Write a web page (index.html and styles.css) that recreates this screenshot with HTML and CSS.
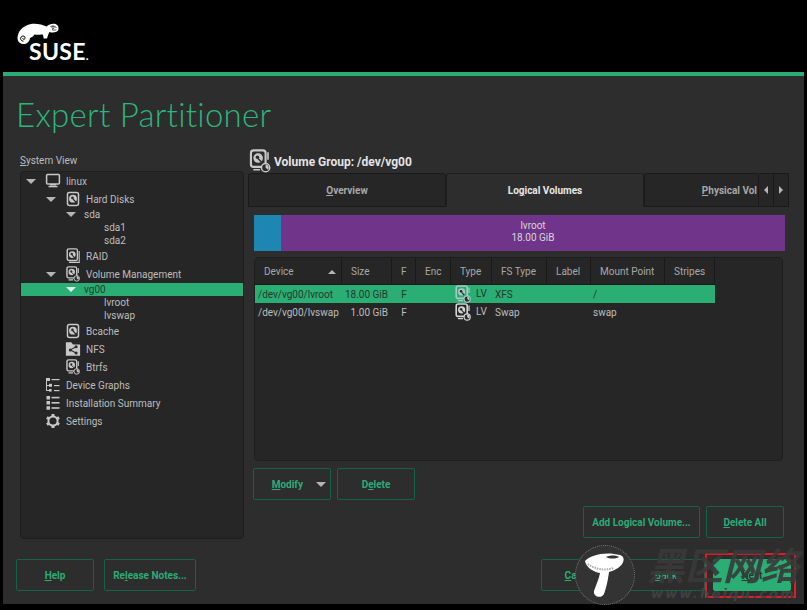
FILE: index.html
```html
<!DOCTYPE html>
<html lang="en">
<head>
<meta charset="utf-8">
<title>Expert Partitioner</title>
<link rel="stylesheet" href="styles.css">
</head>
<body>
<svg class="defs" width="0" height="0" aria-hidden="true">
  <symbol id="disk" viewBox="0 0 16 18">
    <rect x="1.8" y="1.8" width="12.4" height="14.4" rx="2" fill="none" stroke="currentColor" stroke-width="1.7"/>
    <circle cx="8" cy="8.6" r="4.4" fill="currentColor"/>
    <circle cx="7.4" cy="7.8" r="1.5" fill="#2a2a2a"/>
    <path d="M8 9 L11.4 12.6" stroke="#2a2a2a" stroke-width="1.3"/>
  </symbol>
  <symbol id="raid" viewBox="0 0 16 18">
    <rect x="1.5" y="1" width="11.5" height="13" rx="2" fill="none" stroke="currentColor" stroke-width="1.6"/>
    <circle cx="7.2" cy="7.4" r="3.8" fill="currentColor"/>
    <circle cx="6.6" cy="6.8" r="1.4" fill="#2a2a2a"/>
    <path d="M7 8 L10 11" stroke="#2a2a2a" stroke-width="1.2"/>
    <path d="M15 3.5 V16.2 H3.5" fill="none" stroke="currentColor" stroke-width="1.2"/>
  </symbol>
  <symbol id="vol" viewBox="0 0 16 18">
    <rect x="1.2" y="1" width="11" height="12.4" rx="2" fill="none" stroke="currentColor" stroke-width="1.6"/>
    <circle cx="6.6" cy="6.8" r="3.6" fill="currentColor"/>
    <circle cx="6.1" cy="6.2" r="1.3" fill="#2a2a2a"/>
    <path d="M6.5 7.2 L9.2 10" stroke="#2a2a2a" stroke-width="1.1"/>
    <path d="M14 2.5 V8 M3 15.6 H8" fill="none" stroke="currentColor" stroke-width="1.2"/>
    <circle cx="12.2" cy="14" r="3.1" fill="#2a2a2a" stroke="currentColor" stroke-width="1.1"/>
    <path d="M12.2 14 V11.6 A2.4 2.4 0 0 1 14 15.6 Z" fill="currentColor"/>
  </symbol>
  <symbol id="nfs" viewBox="0 0 16 18">
    <path d="M0 1.5 H6 L8 4 H16 V16.5 H0 Z" fill="currentColor"/>
    <path d="M11.5 6.5 L5 10 L11.5 13.5" fill="none" stroke="#2a2a2a" stroke-width="1.2"/>
    <circle cx="11.5" cy="6.5" r="1.7" fill="#2a2a2a"/>
    <circle cx="5" cy="10" r="1.7" fill="#2a2a2a"/>
    <circle cx="11.5" cy="13.5" r="1.7" fill="#2a2a2a"/>
  </symbol>
  <symbol id="graph" viewBox="0 0 16 16">
    <g fill="currentColor">
      <rect x="1" y="1" width="4" height="3"/>
      <rect x="6.5" y="2" width="8" height="1.2"/>
      <rect x="1" y="4" width="1" height="9"/>
      <rect x="1" y="8" width="3" height="1"/>
      <rect x="4" y="6.8" width="3" height="3"/>
      <rect x="9" y="8" width="5.5" height="1.2"/>
      <rect x="1" y="13" width="3" height="1"/>
      <rect x="4" y="12" width="2.6" height="2.6"/>
      <rect x="9" y="13" width="5.5" height="1.2"/>
    </g>
  </symbol>
  <symbol id="summary" viewBox="0 0 16 16">
    <g fill="currentColor">
      <rect x="1.5" y="1" width="3.5" height="3.5"/>
      <rect x="6.5" y="1.8" width="8" height="1.6"/>
      <rect x="1.5" y="6" width="3.5" height="3.5"/>
      <rect x="6.5" y="7" width="8" height="1.6"/>
      <rect x="1.5" y="11.2" width="3.5" height="3.5"/>
      <rect x="6.5" y="12.2" width="8" height="1.6"/>
    </g>
  </symbol>
  <symbol id="gear" viewBox="0 0 16 16">
    <circle cx="8" cy="8" r="4.6" fill="none" stroke="currentColor" stroke-width="2"/>
    <path d="M8 1 V3 M8 13 V15 M1.9 4.5 L3.7 5.5 M12.3 10.5 L14.1 11.5 M1.9 11.5 L3.7 10.5 M12.3 5.5 L14.1 4.5" stroke="currentColor" stroke-width="3"/>
  </symbol>
  <symbol id="monitor" viewBox="0 0 16 16">
    <rect x="1.6" y="1.6" width="12.8" height="9.3" rx="1" fill="none" stroke="currentColor" stroke-width="1.5"/>
    <rect x="5" y="11" width="6" height="1.5" fill="currentColor"/>
    <rect x="3.5" y="12.8" width="9" height="1.5" fill="currentColor"/>
  </symbol>
</svg>

<header class="topbar">
  <div class="logo">
    <svg class="logo-mark" width="42" height="21" viewBox="0 0 42 21">
      <path d="M0.5 15 C0.5 8 6 3 13 1.2 C19 0 25 1.6 29.5 3.4 C33 0.2 38 0 40.2 2 C42.2 4 41.8 7.2 40 8.6 C37 10 34.5 9.6 32.4 9 C31.4 11 30.8 13 30 15.5 L26.5 15.5 C26.6 13.4 26.4 12.4 25.2 11.2 C22.5 12 20 12 17.5 11.5 C16.5 13 15.5 14 13 15 C12.5 19 9.5 21 6.5 21 C3 21 0.5 18.5 0.5 15 Z" fill="#fff"/>
      <path d="M6.5 18.2 C4.5 18.2 3.4 16.6 3.6 15.2 C3.9 13.4 5.6 12.6 7 13.2 C8.4 13.8 8.6 15.8 7.2 16.3 C6.2 16.5 5.6 15.8 5.9 15" fill="none" stroke="#000" stroke-width="1"/>
      <path d="M33.5 3.5 C36 2.4 39 3.2 39.4 5 M35 6.5 C36.4 7.4 38 7.2 39.4 6.6" fill="none" stroke="#000" stroke-width=".7"/>
      <circle cx="36" cy="4.6" r="1.1" fill="none" stroke="#000" stroke-width=".6"/>
    </svg>
    <div class="logo-text">SUSE<span class="logo-dot">.</span></div>
  </div>
</header>

<main class="window">
  <h1 class="title">Expert Partitioner</h1>

  <div class="columns">
    <section class="side">
      <div class="side-label"><u>S</u>ystem View</div>
      <div class="tree">
        <div class="row row-tall"><span class="arrow a0"></span><svg class="ico ico0"><use href="#monitor"/></svg><span class="t0">linux</span></div>
        <div class="row row-tall"><span class="arrow a1"></span><svg class="ico ico1"><use href="#disk"/></svg><span class="t1">Hard Disks</span></div>
        <div class="row"><span class="arrow a2"></span><span class="t2">sda</span></div>
        <div class="row"><span class="t3">sda1</span></div>
        <div class="row"><span class="t3">sda2</span></div>
        <div class="row row-tall"><svg class="ico ico1 no-arrow1"><use href="#raid"/></svg><span class="t1">RAID</span></div>
        <div class="row row-tall"><span class="arrow a1"></span><svg class="ico ico1"><use href="#vol"/></svg><span class="t1">Volume Management</span></div>
        <div class="row row-sel"><span class="arrow a2"></span><span class="t2">vg00</span></div>
        <div class="row"><span class="t3">lvroot</span></div>
        <div class="row"><span class="t3">lvswap</span></div>
        <div class="row row-tall"><svg class="ico ico1 no-arrow1"><use href="#disk"/></svg><span class="t1">Bcache</span></div>
        <div class="row row-tall"><svg class="ico ico1 no-arrow1"><use href="#nfs"/></svg><span class="t1">NFS</span></div>
        <div class="row row-tall"><svg class="ico ico1 no-arrow1"><use href="#vol"/></svg><span class="t1">Btrfs</span></div>
        <div class="row row-tall"><svg class="ico ico0 no-arrow0"><use href="#graph"/></svg><span class="t0">Device Graphs</span></div>
        <div class="row row-tall"><svg class="ico ico0 no-arrow0"><use href="#summary"/></svg><span class="t0">Installation Summary</span></div>
        <div class="row row-tall"><svg class="ico ico0 no-arrow0"><use href="#gear"/></svg><span class="t0">Settings</span></div>
      </div>
    </section>

    <section class="detail">
      <div class="heading"><svg class="heading-ico"><use href="#vol"/></svg><span class="heading-text">Volume Group: /dev/vg00</span></div>
      <div class="tabs">
        <div class="tab"><span><u>O</u>verview</span></div>
        <div class="tab tab-active"><span>Lo<u>g</u>ical Volumes</span></div>
        <div class="tab tab-clip"><span><u>P</u>hysical Vol</span></div>
        <div class="tab-nav"><span class="tri tri-left"></span></div>
        <div class="tab-nav"><span class="tri tri-right"></span></div>
      </div>
      <div class="tab-body">
        <div class="usage">
          <div class="usage-free"></div>
          <div class="usage-lv">lvroot<br>18.00 GiB</div>
        </div>
        <div class="table-box">
          <table class="vols">
            <thead>
              <tr>
                <th class="c-dev">Device<span class="sort"></span></th>
                <th class="c-size">Size</th>
                <th class="c-f">F</th>
                <th class="c-enc">Enc</th>
                <th class="c-type">Type</th>
                <th class="c-fs">FS Type</th>
                <th class="c-label">Label</th>
                <th class="c-mount">Mount Point</th>
                <th class="c-stripes">Stripes</th>
              </tr>
            </thead>
            <tbody>
              <tr class="tr-sel">
                <td class="dev">/dev/vg00/lvroot</td><td class="num">18.00 GiB</td><td class="f">F</td><td></td>
                <td class="type"><svg class="type-ico"><use href="#vol"/></svg>LV</td><td class="fs">XFS</td><td></td><td class="mp">/</td><td></td>
              </tr>
              <tr>
                <td class="dev">/dev/vg00/lvswap</td><td class="num">1.00 GiB</td><td class="f">F</td><td></td>
                <td class="type"><svg class="type-ico"><use href="#vol"/></svg>LV</td><td class="fs">Swap</td><td></td><td class="mp">swap</td><td></td>
              </tr>
            </tbody>
          </table>
        </div>
        <div class="actions">
          <button class="btn btn-menu"><span><u>M</u>odify</span><span class="caret"></span></button>
          <button class="btn">D<u>e</u>lete</button>
        </div>
        <div class="actions actions-end">
          <button class="btn btn-wide">Add Lo<u>g</u>ical Volume...</button>
          <button class="btn"><u>D</u>elete All</button>
        </div>
      </div>
    </section>
  </div>

  <footer class="footer">
    <button class="btn"><u>H</u>elp</button>
    <button class="btn btn-notes">Re<u>l</u>ease Notes...</button>
    <div class="spacer"></div>
    <button class="btn"><u>C</u>ancel</button>
    <button class="btn"><u>B</u>ack</button>
    <button class="btn btn-primary"><u>N</u>ext</button>
  </footer>
</main>

<div class="wm-box"></div>
<div class="wm-circle">
  <svg width="42" height="46" viewBox="0 0 42 46">
    <path d="M1 9 C6 3 22 -1 36 3 C42 5 40 12 34 16 C31 18 28 19 25 20 C24 28 22 37 20 42 C17 47 9 45 10 39 C12 33 15 27 16 21 C9 20 2 15 1 9 Z" fill="#fff"/>
    <path d="M22 5 C26 3 32 3 35 5 C31 7 26 7 22 5 Z" fill="#333"/>
    <path d="M4 12 C10 17 20 19 30 16" fill="none" stroke="#aaa" stroke-width="2" stroke-dasharray="1.5 1"/>
  </svg>
</div>
<div class="wm-cn">黑区网络</div>
<div class="wm-url">www.heiqu.com</div>
</body>
</html>
```
FILE: styles.css
```css
* { box-sizing: border-box; }
html, body { margin: 0; padding: 0; }
body {
  position: relative;
  width: 807px;
  height: 610px;
  overflow: hidden;
  background: #000;
  color: #bdbdbd;
  font: 10px/13px Roboto, "Liberation Sans", sans-serif;
}
.defs { position: absolute; }

.topbar { height: 72px; padding: 23px 0 0 17px; }
.logo { width: 80px; }
.logo-mark { display: block; }
.logo-text {
  margin: -3px 0 0 12px;
  font: 700 23px/20px Lato, sans-serif;
  color: #fff;
  letter-spacing: .3px;
}
.logo-dot { font-size: 12px; letter-spacing: 0; }

.window {
  margin: 0 3px;
  height: 532px;
  background: #2d2d2d;
  border-top: 4px solid #2bac76;
  display: flex;
  flex-direction: column;
}
.title {
  margin: 0;
  height: 73px;
  padding: 18px 0 0 13px;
  font: 300 33px/40px Lato, sans-serif;
  color: #2db57c;
  letter-spacing: .25px;
}

.columns { display: flex; margin-left: 17px; gap: 4px; height: 390px; }
.side { width: 224px; }
.side-label { height: 22px; padding-top: 5px; color: #bdbdbd; }
.tree {
  height: 368px;
  background: #262626;
  border: 1px solid #1e1e1e;
  border-radius: 4px;
}
.row {
  height: 13px;
  display: flex;
  align-items: center;
  position: relative;
  white-space: nowrap;
}
.row-tall { height: 18px; }
.row-sel { background: #2bae74; color: #263a30; }
.row-sel .arrow { border-top-color: #dff2ea; }
.arrow {
  width: 0; height: 0;
  border-left: 5px solid transparent;
  border-right: 5px solid transparent;
  border-top: 5px solid #b5b5b5;
  flex: none;
}
.a0 { margin-left: 5px; }
.a1 { margin-left: 25px; }
.a2 { margin-left: 45px; }
.ico { color: #c8c8c8; flex: none; height: 16px; width: 16px; }
.ico0 { margin-left: 9px; }
.ico1 { margin-left: 9px; }
.no-arrow0 { margin-left: 24px; }
.no-arrow1 { margin-left: 44px; }
.t0 { margin-left: 5px; }
.t1 { margin-left: 5px; }
.t2 { margin-left: 8px; }
.t3 { margin-left: 83px; }

.detail { flex: 1; }
.heading {
  height: 24px;
  display: flex;
  align-items: center;
  gap: 3px;
  margin-left: 1px;
  font-size: 12px;
  font-weight: 700;
  color: #e4e4e4;
}
.heading-text { margin-top: 2px; }
.heading-ico { width: 22px; height: 24px; color: #c8c8c8; }

.tabs { display: flex; height: 34px; width: 541px; }
.tab {
  width: 198px;
  background: #262626;
  border: 1px solid #1a1a1a;
  border-radius: 3px 3px 0 0;
  display: flex;
  align-items: center;
  justify-content: center;
  font-weight: 700;
  font-size: 10px;
  color: #a8a8a8;
}
.tab-active {
  background: #2d2d2d;
  border-color: #1f1f1f;
  border-bottom: 0;
  color: #e8e8e8;
}
.tab-clip {
  width: 115px;
  justify-content: flex-end;
  padding-right: 1px;
  overflow: hidden;
  white-space: nowrap;
}
.tab-nav {
  width: 15px;
  background: #262626;
  border: 1px solid #1a1a1a;
  border-left: 0;
  display: flex;
  align-items: center;
  justify-content: center;
}
.tri { width: 0; height: 0; border-top: 4px solid transparent; border-bottom: 4px solid transparent; }
.tri-left { border-right: 4px solid #b5b5b5; }
.tri-right { border-left: 4px solid #b5b5b5; }

.tab-body { padding: 8px 0 0 6px; }
.usage { display: flex; width: 531px; height: 36px; }
.usage-free { width: 27px; background: #1d86b3; }
.usage-lv {
  flex: 1;
  background: #70358a;
  color: #d6d6d6;
  text-align: center;
  padding-top: 5px;
  line-height: 12px;
}
.table-box {
  width: 529px;
  height: 204px;
  margin-top: 6px;
  background: #262626;
  border: 1px solid #1e1e1e;
  border-radius: 4px;
}
.vols { border-collapse: separate; border-spacing: 0; table-layout: fixed; width: 460px; }
.vols th {
  height: 27px;
  padding: 0 0 0 9px;
  background: #262626;
  border-right: 1px solid #1a1a1a;
  border-bottom: 1px solid #1a1a1a;
  font-weight: 400;
  font-size: 10px;
  color: #a8a8a8;
  text-align: left;
  position: relative;
}
.c-dev { width: 87px; }
.c-size { width: 50px; }
.c-f { width: 24px; }
.c-enc { width: 35px; }
.c-type { width: 41px; }
.c-fs { width: 55px; }
.c-label { width: 44px; }
.c-mount { width: 74px; }
.c-stripes { width: 50px; }
.sort {
  position: absolute;
  right: 5px; top: 12px;
  width: 0; height: 0;
  border-left: 4px solid transparent;
  border-right: 4px solid transparent;
  border-bottom: 4px solid #b5b5b5;
}
.vols td { height: 18px; padding: 0; white-space: nowrap; overflow: visible; }
.tr-sel td { background: #2bae74; color: #24382e; }
.vols .dev { padding-left: 3px; }
.vols .num { text-align: right; padding-right: 4px; }
.f { text-align: center; }
.type { text-align: left; }
.type-ico { width: 16px; height: 18px; vertical-align: middle; margin: 0 5px 0 4px; color: #d4d4d4; }
.tr-sel .type-ico { color: #a8c8c4; }
.vols .fs { padding-left: 3px; }
.vols .mp { padding-left: 2px; }

.actions { display: flex; gap: 6px; margin: 7px 0 0 -1px; }
.actions-end { justify-content: flex-end; width: 530px; margin-top: 6px; margin-left: 0; }
.btn {
  width: 78px;
  height: 32px;
  padding: 0;
  background: transparent;
  border: 1px solid #15614a;
  border-radius: 2px;
  color: #2bac76;
  font: 700 10px/13px Roboto, "Liberation Sans", sans-serif;
  flex: none;
}
.btn-menu { display: flex; align-items: center; justify-content: flex-end; padding-right: 4px; gap: 13px; }
.caret {
  width: 0; height: 0;
  border-left: 5px solid transparent;
  border-right: 5px solid transparent;
  border-top: 5px solid #b5b5b5;
}
.btn-wide { width: 117px; }
.btn-notes { width: 92px; }
.btn-primary { background: #2bae74; border-color: #2bae74; color: #24382e; }

.footer {
  display: flex;
  gap: 10px;
  margin: 20px 13px 0 13px;
  height: 32px;
}
.spacer { flex: 1; }
.footer .btn:nth-last-child(-n+2) { margin-left: -2px; }

.wm-box {
  position: absolute;
  left: 705px; top: 553px;
  width: 91px; height: 45px;
  border: 2px solid #e01c24;
}
.wm-circle {
  position: absolute;
  left: 575px; top: 545px;
  width: 60px; height: 60px;
  border-radius: 50%;
  background: #333;
  border: 1px dotted #777;
  display: flex;
  align-items: center;
  justify-content: center;
}
.wm-cn {
  position: absolute;
  left: 647px; top: 541px;
  font: italic 700 38px/46px "Noto Sans CJK SC", sans-serif;
  color: rgba(58, 58, 58, .92);
  white-space: nowrap;
}
.wm-url {
  position: absolute;
  left: 651px; top: 586px;
  font: italic 700 13px/16px "DejaVu Sans", sans-serif;
  letter-spacing: 2.2px;
  color: rgba(66, 66, 66, .95);
  white-space: nowrap;
}
```
